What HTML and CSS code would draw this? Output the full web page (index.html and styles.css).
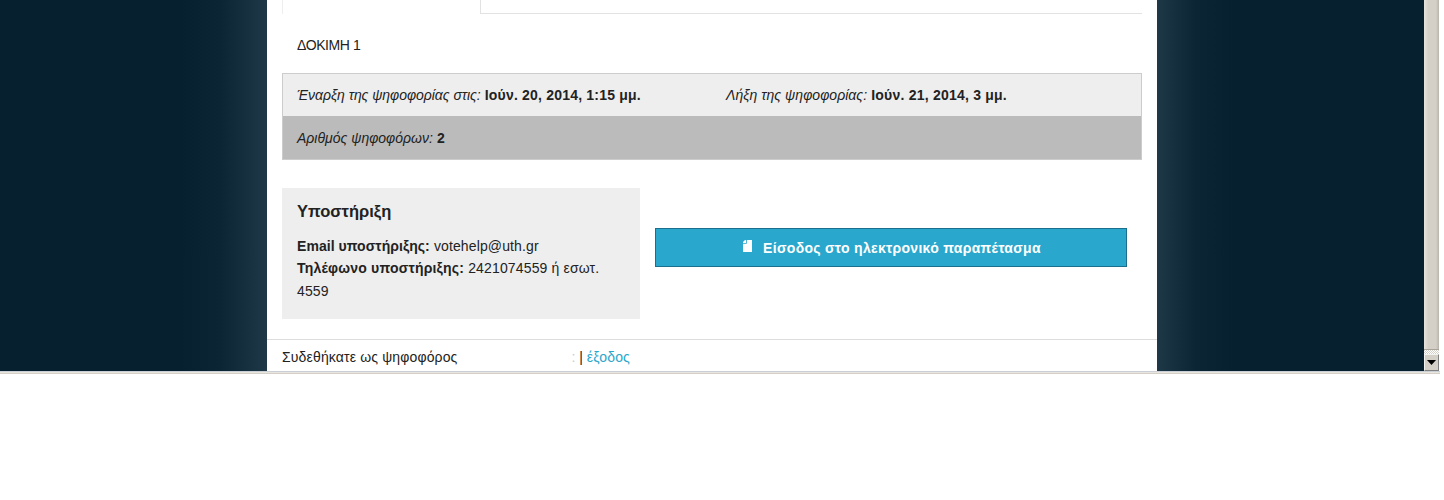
FILE: index.html
```html
<!DOCTYPE html>
<html lang="el">
<head>
<meta charset="utf-8">
<title>Ηλεκτρονικό παραπέτασμα</title>
<link rel="stylesheet" href="styles.css">
</head>
<body>
<div class="frame">
  <div class="viewport">
    <div class="side side-left"></div>
    <main class="sheet">
      <div class="tabs"><div class="tab"></div></div>
      <p class="title">ΔΟΚΙΜΗ 1</p>
      <div class="info">
        <div class="info-row info-dates">
          <div class="date-start"><em>Έναρξη της ψηφοφορίας στις:</em> <strong>Ιούν. 20, 2014, 1:15 μμ.</strong></div>
          <div class="date-end"><em>Λήξη της ψηφοφορίας:</em> <strong>Ιούν. 21, 2014, 3 μμ.</strong></div>
        </div>
        <div class="info-row info-voters"><em>Αριθμός ψηφοφόρων:</em> <strong>2</strong></div>
      </div>
      <div class="lower">
        <section class="support">
          <h3>Υποστήριξη</h3>
          <p><strong class="email-label">Email υποστήριξης:</strong> <span class="email">votehelp@uth.gr</span><br><strong>Τηλέφωνο υποστήριξης:</strong> 2421074559 ή εσωτ. 4559</p>
        </section>
        <div class="action">
          <a class="booth" href="#">
            <svg class="booth-icon" width="9" height="12" viewBox="0 0 9 12"><path d="M0 2 2 0 3 0V3H0zM3.8 0H9V12H0V3.8H3.8z" fill="#fff"/></svg>
            <span>Είσοδος στο ηλεκτρονικό παραπέτασμα</span>
          </a>
        </div>
      </div>
      <footer class="foot">
        <span class="who">Συδεθήκατε ως ψηφοφόρος</span><span class="colon">:</span> | <a href="#">έξοδος</a>
      </footer>
    </main>
    <div class="side side-right"></div>
    <div class="scrollbar">
      <div class="thumb"></div>
      <div class="track"></div>
      <div class="arrow"><svg width="9" height="5" viewBox="0 0 9 5"><path d="M0 0h9L4.5 5z" fill="#000"/></svg></div>
    </div>
  </div>
  <div class="frame-edge"></div>
</div>
</body>
</html>
```
FILE: styles.css
```css
* { box-sizing: border-box; }
html, body { margin: 0; padding: 0; background: #fff; overflow: hidden; }
body { font: 14px/22.4px "Liberation Sans", Arial, sans-serif; color: #222; letter-spacing: 0.15px; }
strong { letter-spacing: 0.2px; }
.frame { width: 1440px; }
.viewport { display: flex; height: 371px; overflow: hidden; }
.side { flex: 1; background: #06202f; }
.side-left { background: linear-gradient(to right, #06202f 0, #06202f 180px, #0b2535 220px, #1f3847 267px); }
.side-right { background: linear-gradient(to left, #06202f 0, #06202f 190px, #0b2535 228px, #1f3847 267px); }
.sheet { width: 890px; flex: none; background: #fff; height: 371px; overflow: hidden; }
.tabs { height: 14px; margin: 0 15px; border-bottom: 1px solid #e2e2e2; }
.tab { width: 199px; height: 14px; background: #fff; border-right: 1px solid #e2e2e2; border-left: 1px solid #eee; }
.title { margin: 0; padding: 20px 15px 0 30px; height: 59px; letter-spacing: -0.4px; }
.info { margin: 0 15px; border: 1px solid #ccc; }
.info-row { display: flex; align-items: center; height: 43px; padding: 0 14px; }
.info-dates { background: #eee; height: 42px; }
.date-start em { letter-spacing: -0.04px; }
.date-end em { letter-spacing: 0.04px; }
.date-end strong { letter-spacing: 0.22px; }
.info-voters { background: #bbb; display: block; padding-top: 11px; }
.info-voters em { letter-spacing: 0; }
.date-start { width: 429px; }
.lower { display: flex; margin: 28px 15px 0; }
.support { width: 358px; height: 131px; background: #eee; padding: 12px 15px; }
.support h3 { margin: 0 0 13px; font-size: 16.5px; line-height: 22px; font-weight: bold; letter-spacing: 0; }
.support p { margin: 0; }
.support .email-label { letter-spacing: 0.05px; }
.email { letter-spacing: 0.13px; }
.action { flex: 1; padding: 40px 15px 0; }
.booth { display: flex; align-items: center; justify-content: center; gap: 11px; height: 39px; padding: 2px 0 0 2px; background: #29a7cc; border: 1px solid #1a6f8c; color: #fff; font-weight: bold; text-decoration: none; letter-spacing: 0.29px; }
.booth-icon { margin-top: -6px; }
.foot { margin-top: 20px; border-top: 1px solid #ddd; padding: 6px 15px 0; letter-spacing: 0; }
.who { display: inline-block; width: 289.5px; letter-spacing: 0.15px; }
.colon { color: #ccc; }
.foot a { color: #29a7cc; text-decoration: none; letter-spacing: 0.15px; }
.scrollbar { width: 15px; flex: none; margin-right: 1px; display: flex; flex-direction: column; background: #d4d0c8; }
.thumb { flex: 1; background: linear-gradient(to right, #e6e3dc, #d4d0c8 30%, #d4d0c8 80%, #b8b4ac); border-bottom: 1px solid #a8a49c; }
.track { height: 4px; background: repeating-conic-gradient(#fff 0 25%, #d4d0c8 0 50%) 0 0 / 2px 2px; }
.arrow { height: 17px; background: #d4d0c8; border: 1px solid #f4f2ee; border-right-color: #808080; border-bottom-color: #808080; display: flex; align-items: center; justify-content: center; }
.frame-edge { height: 3px; background: #e8e6de; border-top: 1px solid #c9cfd4; border-bottom: 1px solid #d4d0c8; }
```
